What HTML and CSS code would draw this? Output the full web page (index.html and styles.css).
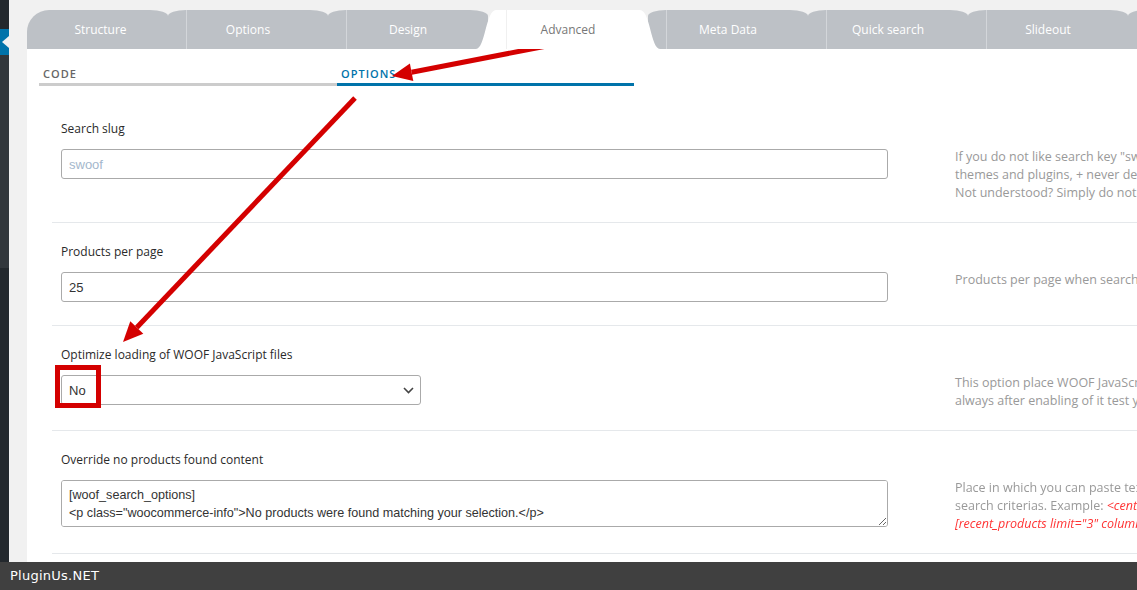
FILE: index.html
```html
<!DOCTYPE html>
<html lang="en">
<head>
    <meta charset="UTF-8">
    <meta name="viewport" content="width=device-width, initial-scale=1.0">
    <title>WOOF - Advanced options</title>
    <link rel="stylesheet" href="styles.css">
</head>
<body>
    <div class="page">
        <div class="admin-menu">
            <div class="menu-top"></div>
            <div class="menu-current"></div>
            <div class="menu-sub"></div>
            <div class="menu-rest"></div>
        </div>

        <div class="wrap">
            <div class="tabs">
                <div class="tab first">Structure</div>
                <div class="tab">Options</div>
                <div class="tab">Design</div>
                <div class="tab active">Advanced</div>
                <div class="tab">Meta Data</div>
                <div class="tab">Quick search</div>
                <div class="tab">Slideout</div>
                <div class="tab"></div>
            </div>

            <div class="panel">
                <div class="subtabs">
                    <div class="subtab">Code</div>
                    <div class="subtab current">Options</div>
                </div>

                <div class="options">
                    <div class="option">
                        <label class="option-title">Search slug</label>
                        <input class="text-input field" type="text" placeholder="swoof">
                        <div class="option-desc">
                            If you do not like search key "swoof" in the search url bar you can set your own. Can be simply "s" or "filter".<br>
                            themes and plugins, + never define it as "product" or "products" - it is reserved word!<br>
                            Not understood? Simply do not touch it!
                        </div>
                    </div>

                    <div class="option">
                        <label class="option-title">Products per page</label>
                        <input class="text-input field" type="text" value="25">
                        <div class="option-desc">
                            Products per page when searching is going only. Set here -1 to prevent pagination managing from here!
                        </div>
                    </div>

                    <div class="option">
                        <label class="option-title">Optimize loading of WOOF JavaScript files</label>
                        <div class="select-wrap field">
                            <select class="select">
                                <option>No</option>
                                <option>Yes</option>
                            </select>
                            <svg class="select-arrow" width="11" height="7" viewBox="0 0 11 7">
                                <path d="M1 1 L5.5 5.5 L10 1" fill="none" stroke="#444" stroke-width="1.6"/>
                            </svg>
                        </div>
                        <div class="option-desc">
                            This option place WOOF JavaScript files on the page footer, this is good for page speed. Be careful and<br>
                            always after enabling of it test your site front work!
                        </div>
                    </div>

                    <div class="option">
                        <label class="option-title">Override no products found content</label>
                        <textarea class="text-area field">[woof_search_options]
&lt;p class="woocommerce-info"&gt;No products were found matching your selection.&lt;/p&gt;</textarea>
                        <div class="option-desc">
                            Place in which you can paste text or/and any shortcodes which will be displayed when customer will not find any products by his<br>
                            search criterias. Example: <i class="code">&lt;center&gt;&lt;h2 style='color:green;'&gt;Where are the products?&lt;/h2&gt;&lt;/center&gt;</i><br>
                            <i class="code">[recent_products limit="3" columns="4" ]</i>
                        </div>
                    </div>
                </div>
            </div>
        </div>
    </div>

    <div class="footer">PluginUs.NET</div>

    <!-- red annotation marks -->
    <svg class="marks" width="1137" height="590" viewBox="0 0 1137 590">
        <line x1="557" y1="44" x2="411.6" y2="72.2" stroke="#d40000" stroke-width="5"/>
        <polygon points="392,76 409.9,63.4 413.3,81" fill="#d40000"/>
        <line x1="355" y1="98" x2="136.8" y2="327.5" stroke="#d40000" stroke-width="5"/>
        <polygon points="123,342 130.3,321.3 143.3,333.7" fill="#d40000"/>
        <rect x="57.5" y="367.5" width="41" height="38" fill="none" stroke="#d40000" stroke-width="5"/>
    </svg>
</body>
</html>
```

FILE: styles.css
```css
body {
    margin: 0;
    width: 1137px;
    height: 590px;
    overflow: hidden;
    position: relative;
    background: #f1f1f1;
    font-family: "Open Sans", sans-serif;
    color: #333;
}
.page {
    display: flex;
    height: 562px;
}

/* wp admin menu strip */
.admin-menu {
    width: 9px;
    flex-shrink: 0;
    display: flex;
    flex-direction: column;
    background: #23282d;
}
.menu-top {
    height: 29px;
}
.menu-current {
    height: 26px;
    background: #0073aa;
    position: relative;
}
.menu-current::after {
    content: "";
    position: absolute;
    right: 0;
    top: 7px;
    border-top: 6px solid transparent;
    border-bottom: 6px solid transparent;
    border-right: 7px solid #f1f1f1;
}
.menu-sub {
    height: 213px;
    background: #32373c;
}
.menu-rest {
    flex: 1;
}

.wrap {
    flex: 1;
    min-width: 0;
    overflow: hidden;
    padding: 10px 0 0 18px;
    display: flex;
    flex-direction: column;
}

/* main tabs */
.tabs {
    display: flex;
    height: 39px;
    flex-shrink: 0;
}
.tab {
    flex: 0 0 160px;
    position: relative;
    background: #bdc1c6;
    color: #fff;
    font-size: 12px;
    line-height: 39px;
    text-align: center;
    border-radius: 18px 18px 0 0 / 6px 6px 0 0;
}
.tab::before {
    content: "";
    position: absolute;
    left: 18px;
    top: 0;
    bottom: 0;
    width: 1px;
    background: #d3d6da;
}
.tab.first {
    flex-basis: 141px;
    padding-left: 6px;
    box-sizing: border-box;
    border-top-left-radius: 22px;
}
.tab.first::before {
    display: none;
}
.tab.active {
    flex-basis: 184px;
    margin: 0 -12px;
    z-index: 1;
    background: #fff;
    color: #777;
    border-radius: 0;
    clip-path: path("M0 39 C9 39 10 0 20 0 H164 C174 0 175 39 184 39 Z");
}
.tab.active::before {
    left: 30px;
    background: #f0f0f0;
}

.panel {
    flex: 1;
    background: #fff;
}

/* sub tabs */
.subtabs {
    display: flex;
    margin-left: 12px;
}
.subtab {
    width: 298px;
    box-sizing: border-box;
    padding: 17px 4px 1px;
    line-height: 16px;
    font-size: 11px;
    font-weight: 600;
    letter-spacing: 1px;
    text-transform: uppercase;
    color: #666;
    border-bottom: 3px solid #ccc;
}
.subtab.current {
    width: 297px;
    color: #0073aa;
    border-color: #0073aa;
}

/* option rows */
.options {
    margin: 14px 0 0 25px;
}
.option {
    display: grid;
    grid-template-columns: 827px minmax(0, 1fr);
    column-gap: 67px;
    padding: 20px 0 20px 9px;
    border-bottom: 1px solid #e5e8eb;
}
.option-title {
    grid-column: 1 / -1;
    font-size: 12px;
    line-height: 18px;
    color: #2a2a2a;
    margin-bottom: 11px;
}
.option-desc {
    margin-top: -1px;
    font-size: 12.5px;
    line-height: 18px;
    color: #999;
    white-space: nowrap;
}
.option-desc .code {
    color: #f33;
}
.field {
    margin-bottom: 3px;
}

.text-input,
.select,
.text-area {
    box-sizing: border-box;
    border: 1px solid #aaa;
    border-radius: 3px;
    font-family: "Liberation Sans", Arial, sans-serif;
    font-size: 13px;
    color: #333;
    background: #fff;
    outline: none;
}
.text-input {
    display: block;
    width: 827px;
    height: 30px;
    padding: 0 7px;
}
.text-input::placeholder {
    color: #a4b7cc;
}
.select-wrap {
    position: relative;
    width: 360px;
    height: 30px;
}
.select {
    width: 100%;
    height: 30px;
    padding: 0 7px;
    appearance: none;
    -webkit-appearance: none;
}
.select-arrow {
    position: absolute;
    right: 7px;
    top: 12px;
}
.text-area {
    display: block;
    width: 827px;
    height: 47px;
    padding: 6px 7px;
    font-size: 12.6px;
    line-height: 17.5px;
    resize: vertical;
}

.footer {
    height: 28px;
    line-height: 28px;
    padding-left: 10px;
    background: #404040;
    color: #fff;
    font-family: "DejaVu Sans", sans-serif;
    font-size: 13px;
    letter-spacing: 0.25px;
}

.marks {
    position: absolute;
    top: 0;
    left: 0;
    pointer-events: none;
}
```
